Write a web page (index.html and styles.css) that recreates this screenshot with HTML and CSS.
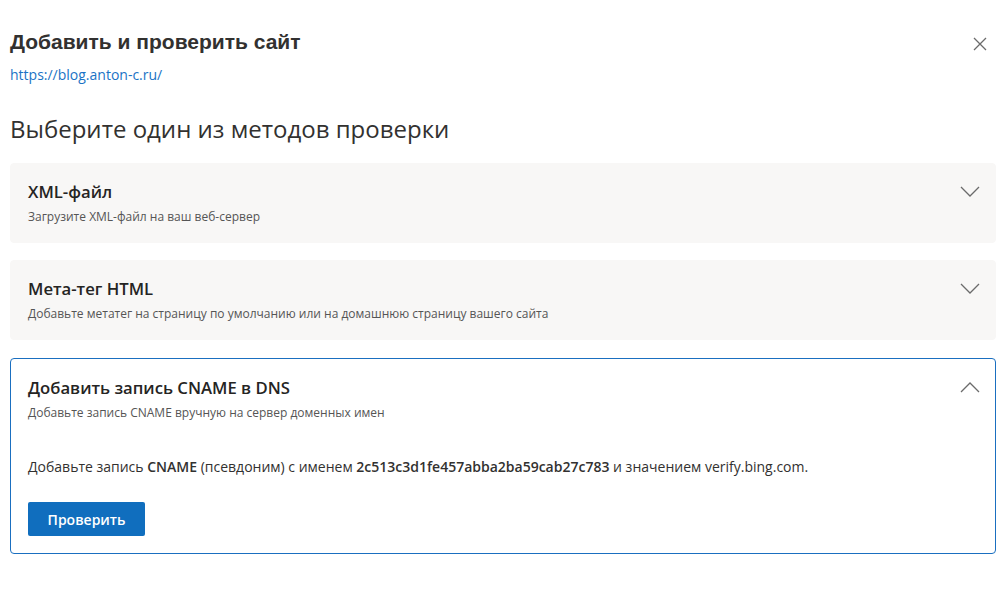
FILE: index.html
```html
<!DOCTYPE html>
<html lang="ru">
<head>
<meta charset="utf-8">
<link rel="stylesheet" href="styles.css">
</head>
<body>
<div class="page">
  <header class="top">
    <div>
      <h1 class="title">Добавить и проверить сайт</h1>
      <a class="url" href="#">https://blog.anton-c.ru/</a>
    </div>
    <button class="close" aria-label="Закрыть">
      <svg width="14" height="14" viewBox="0 0 14 14"><path d="M1 1L13 13M13 1L1 13" stroke="#6b6b6b" stroke-width="1.3" fill="none"/></svg>
    </button>
  </header>
  <h2 class="subtitle">Выберите один из методов проверки</h2>
  <div class="cards">
    <div class="card">
      <div class="card-head">
        <div>
          <div class="card-title">XML-файл</div>
          <div class="card-desc">Загрузите XML-файл на ваш веб-сервер</div>
        </div>
        <svg class="chev" width="20" height="11" viewBox="0 0 20 11"><path d="M1 1L10 10L19 1" stroke="#6b6b6b" stroke-width="1.3" fill="none"/></svg>
      </div>
    </div>
    <div class="card">
      <div class="card-head">
        <div>
          <div class="card-title">Мета-тег HTML</div>
          <div class="card-desc">Добавьте метатег на страницу по умолчанию или на домашнюю страницу вашего сайта</div>
        </div>
        <svg class="chev" width="20" height="11" viewBox="0 0 20 11"><path d="M1 1L10 10L19 1" stroke="#6b6b6b" stroke-width="1.3" fill="none"/></svg>
      </div>
    </div>
    <div class="card open">
      <div class="card-head">
        <div>
          <div class="card-title">Добавить запись CNAME в DNS</div>
          <div class="card-desc">Добавьте запись CNAME вручную на сервер доменных имен</div>
        </div>
        <svg class="chev" width="20" height="11" viewBox="0 0 20 11"><path d="M1 10L10 1L19 10" stroke="#6b6b6b" stroke-width="1.3" fill="none"/></svg>
      </div>
      <p class="card-body">Добавьте запись <b>CNAME</b> (псевдоним) с именем <b>2c513c3d1fe457abba2ba59cab27c783</b> и значением verify.bing.com.</p>
      <button class="btn">Проверить</button>
    </div>
  </div>
</div>
</body>
</html>
```

FILE: styles.css
```css
* { box-sizing: border-box; }
html, body { margin: 0; padding: 0; background: #fff; }
body {
  font-family: "Open Sans", "Noto Sans", sans-serif;
  color: #323130;
}
.page {
  padding: 29px 5px 0 10px;
}
.top {
  display: flex;
  justify-content: space-between;
  align-items: flex-start;
}
.title {
  margin: 0;
  font-family: "Liberation Sans", Arial, sans-serif;
  font-size: 21px;
  font-weight: bold;
  line-height: 26px;
  color: #323130;
}
.url {
  display: block;
  margin-top: 11px;
  font-size: 14px;
  line-height: 18px;
  color: #1a73c5;
  text-decoration: none;
}
.close {
  background: none;
  border: 0;
  padding: 0;
  margin: 8px 9px 0 0;
  width: 14px;
  height: 14px;
  display: flex;
}
.subtitle {
  margin: 29px 0 0 0;
  font-size: 24px;
  font-weight: 400;
  line-height: 32px;
  color: #323130;
}
.cards {
  margin-top: 18px;
  display: flex;
  flex-direction: column;
  gap: 17px;
  width: 986px;
}
.card {
  background: #f8f7f6;
  border: 1px solid #f8f7f6;
  border-radius: 4px;
  padding: 17px 15px 11px 17px;
  min-height: 80px;
}
.card.open {
  background: #fff;
  border-color: #1a6fc0;
  margin-top: 1px;
  padding-top: 18px;
  padding-bottom: 17px;
}
.card-head {
  display: flex;
  justify-content: space-between;
  align-items: flex-start;
}
.card-title {
  font-size: 16.7px;
  font-weight: 600;
  line-height: 22px;
  color: #252423;
}
.card-desc {
  margin-top: 6px;
  font-size: 12px;
  line-height: 16px;
  color: #555;
}
.chev {
  margin-top: 5px;
}
.card-body {
  margin: 36px 0 0 0;
  font-size: 14px;
  line-height: 20px;
  color: #323130;
}
.card-body b { font-weight: 600; }
.btn {
  margin-top: 25px;
  background: #106ebe;
  color: #fff;
  border: 0;
  border-radius: 2px;
  width: 117px;
  height: 34px;
  font-family: inherit;
  font-size: 14px;
  font-weight: 600;
}
```
